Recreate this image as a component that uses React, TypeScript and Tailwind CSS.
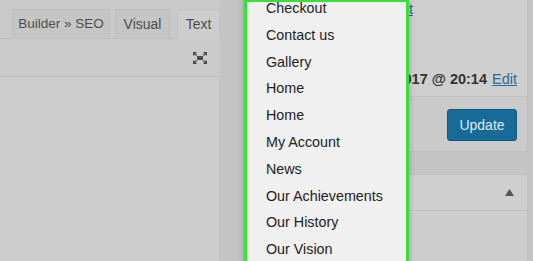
import React from 'react';

const pages = [
  'Checkout',
  'Contact us',
  'Gallery',
  'Home',
  'Home',
  'My Account',
  'News',
  'Our Achievements',
  'Our History',
  'Our Vision',
];

function ExpandIcon() {
  return (
    <svg width="16" height="14" viewBox="0 0 16 14" fill="#4a4a4a">
      <rect x="5" y="5" width="6" height="4" />
      <path d="M1 1h4L3.6 2.4 5.2 4 4.2 5 2.6 3.4 1 5z" />
      <path d="M15 1h-4l1.4 1.4L10.8 4l1 1 1.6-1.6L15 5z" />
      <path d="M1 13h4l-1.4-1.4L5.2 10l-1-1-1.6 1.6L1 9z" />
      <path d="M15 13h-4l1.4-1.4L10.8 10l1-1 1.6 1.6L15 9z" />
    </svg>
  );
}

function Editor() {
  return (
    <div className="w-[220px] flex flex-col">
      {/* Tabs */}
      <div className="h-[38px] flex items-end gap-[5px] pl-[12px]">
        <div className="h-[29px] w-[98px] flex items-center justify-center bg-[#c5c5c5] border border-b-0 border-[#bfbfbf] text-[13.5px] text-[#4d4d4d]">
          Builder » SEO
        </div>
        <div className="h-[29px] w-[55px] flex items-center justify-center bg-[#c5c5c5] border border-b-0 border-[#bfbfbf] text-[14px] text-[#4d4d4d] mr-[2px]">
          Visual
        </div>
        <div className="h-[30px] flex-1 flex items-center justify-center bg-[#cdcdcd] border border-b-0 border-[#c3c3c3] text-[14px] text-[#4d4d4d] -mb-px relative">
          Text
        </div>
      </div>
      {/* Toolbar */}
      <div className="h-[39px] flex items-center justify-end pr-[12px] bg-[#cbcbcb] border-t border-b border-[#bdbdbd]">
        <ExpandIcon />
      </div>
      {/* Content */}
      <div className="flex-1 bg-[#cdcdcd] border-r border-[#c0c0c0]" />
    </div>
  );
}

function Sidebar() {
  return (
    <div className="flex-1 flex flex-col pr-[5px]">
      <div className="bg-[#cecece] border-x border-b border-[#bfbfbf]">
        <div className="h-[97px] overflow-hidden border-b border-[#c1c1c1]">
          <div className="-mt-[8px] flex flex-col text-[14.5px] text-[#333]">
            <div className="h-[35px] flex items-center justify-end pr-[114px] whitespace-nowrap">
              Visibility: <b className="ml-1">Public</b>
              <span className="ml-1 text-[#2a6b98] underline">Edit</span>
            </div>
            <div className="h-[35px] flex items-center justify-end pr-[135px] whitespace-nowrap">
              Status: <b className="ml-1">Published</b>
            </div>
            <div className="h-[35px] flex items-center justify-end pr-[10px] whitespace-nowrap">
              Published on: <b className="ml-1">Apr 12, 2017 @ 20:14</b>
              <span className="ml-[5px] text-[#2a6b98] underline">Edit</span>
            </div>
          </div>
        </div>
        <div className="h-[54px] flex items-start justify-end pt-[12px] pr-[10px] bg-[#cacaca]">
          <div className="w-[70px] h-[32px] rounded-[3px] bg-[#176b97] border border-[#12597f] flex items-center justify-center text-[14px] text-[#dfe8ee]">
            Update
          </div>
        </div>
      </div>
      <div className="h-[22px]" />
      <div className="flex-1 bg-[#cdcdcd] border border-b-0 border-[#bfbfbf]">
        <div className="h-[36px] flex items-center justify-end pr-[13px] bg-[#cfcfcf] border-b border-[#c0c0c0]">
          <svg width="9" height="7" viewBox="0 0 9 7">
            <path d="M4.5 0L9 7H0z" fill="#555" />
          </svg>
        </div>
      </div>
    </div>
  );
}

export default function App() {
  return (
    <div
      className="relative w-[533px] h-[261px] overflow-hidden bg-[#c4c4c4] flex"
      style={{ fontFamily: '"Liberation Sans", Arial, sans-serif' }}
    >
      <div className="w-[220px] bg-[#c9c9c9] flex">
        <Editor />
      </div>
      <div className="w-[24px]" />
      <Sidebar />

      {/* Open select dropdown */}
      <div className="absolute left-[244px] top-0 w-[165px] h-[270px] bg-[#f0f0f0] border-[3px] border-t-2 border-[#3ade3a] overflow-hidden shadow-[0_0_6px_rgba(0,0,0,0.25)]">
        <ul className="-mt-[7px] pl-[19px] text-[14.3px] text-[#222]">
          {pages.map((p, i) => (
            <li key={i} className="h-[26.8px] leading-[26.8px] whitespace-nowrap">
              {p}
            </li>
          ))}
        </ul>
      </div>
    </div>
  );
}
